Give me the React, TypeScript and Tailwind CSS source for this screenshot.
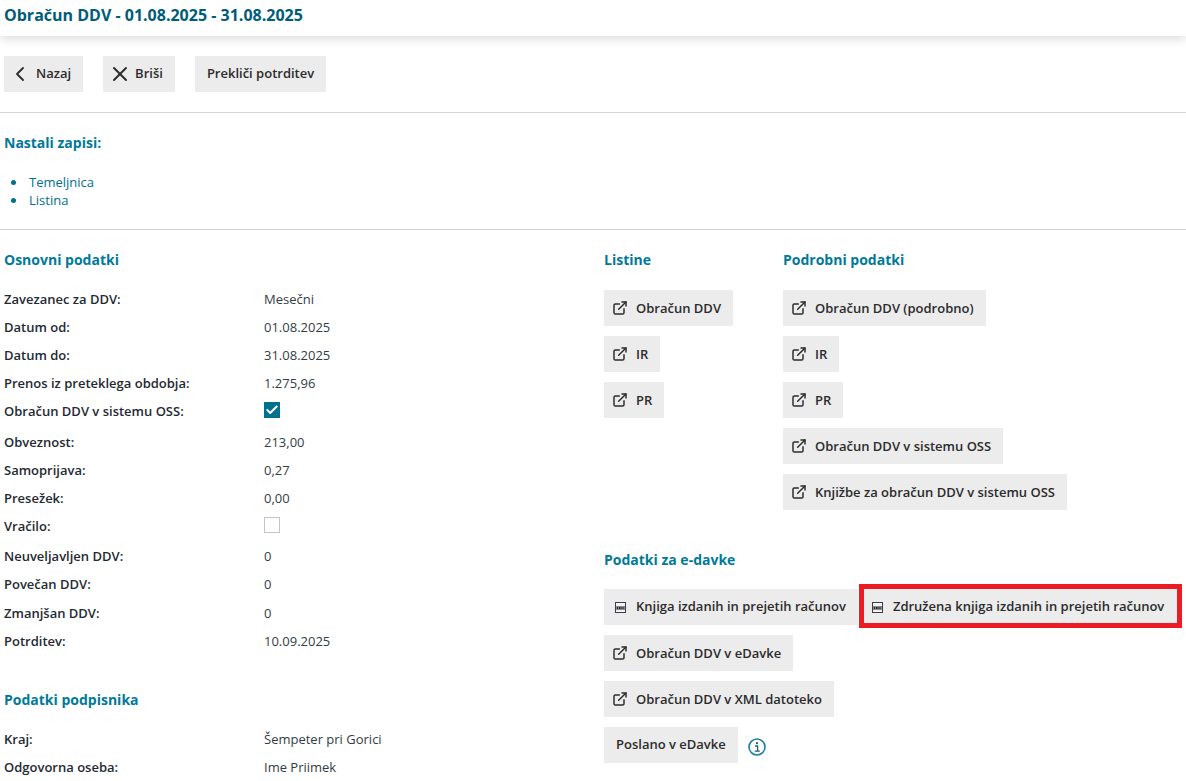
import { ExternalLink, ChevronLeft, X, Check } from 'lucide-react';

const font = { fontFamily: '"Open Sans", sans-serif' };

const basicRows: { label: string; value?: string; check?: boolean; className: string }[] = [
  { label: 'Zavezanec za DDV:', value: 'Mesečni', className: 'h-[28px]' },
  { label: 'Datum od:', value: '01.08.2025', className: 'h-[28px]' },
  { label: 'Datum do:', value: '31.08.2025', className: 'h-[28px]' },
  { label: 'Prenos iz preteklega obdobja:', value: '1.275,96', className: 'h-[28px]' },
  { label: 'Obračun DDV v sistemu OSS:', check: true, className: 'h-[31px] pb-[3px]' },
  { label: 'Obveznost:', value: '213,00', className: 'h-[28px]' },
  { label: 'Samoprijava:', value: '0,27', className: 'h-[28px]' },
  { label: 'Presežek:', value: '0,00', className: 'h-[28px]' },
  { label: 'Vračilo:', check: false, className: 'h-[30px] pb-[2px]' },
  { label: 'Neuveljavljen DDV:', value: '0', className: 'h-[28px]' },
  { label: 'Povečan DDV:', value: '0', className: 'h-[28px]' },
  { label: 'Zmanjšan DDV:', value: '0', className: 'h-[29px] pt-px' },
  { label: 'Potrditev:', value: '10.09.2025', className: 'h-[28px]' },
];

function Row({ label, value, check, className }: { label: string; value?: string; check?: boolean; className?: string }) {
  return (
    <div className={`flex items-center text-[13px] ${className}`}>
      <div className="w-[260px] font-semibold text-[#1f2a33]">{label}</div>
      {check === undefined && <div className="text-[#333c44]">{value}</div>}
      {check === true && (
        <div className="w-4 h-4 mb-1 bg-[#00708f] flex items-center justify-center">
          <Check className="w-[14px] h-[14px] text-white" strokeWidth={3.5} />
        </div>
      )}
      {check === false && <div className="w-4 h-4 mb-1 bg-white border border-[#c4c4c4]" />}
    </div>
  );
}

function XmlIcon() {
  return (
    <svg width="11" height="11" viewBox="0 0 11 11" className="shrink-0">
      <rect x="0.5" y="0.5" width="10" height="10" fill="#f4f4f4" stroke="#3c3c48" />
      <rect x="1" y="4" width="9" height="4" fill="#8a8a8a" />
      <path d="M2 5h1v2H2zM4 5h1v2H4zM5.5 5h1v2h-1zM7.5 5h1v2h-1z" fill="#26262e" />
    </svg>
  );
}

function LinkBtn({ children, className }: { children: React.ReactNode; className?: string }) {
  return (
    <div className={`h-9 inline-flex items-center bg-[#ececec] pl-[8px] pr-3 text-[13px] font-semibold text-[#2b2b2b] w-fit whitespace-nowrap ${className ?? ''}`}>
      <ExternalLink className="w-4 h-4 mr-2" strokeWidth={2.2} />
      <span className="pt-[2px]">{children}</span>
    </div>
  );
}

function XmlBtn({ children, className }: { children: React.ReactNode; className?: string }) {
  return (
    <div className={`relative h-9 inline-flex items-center bg-[#ececec] text-[13px] font-semibold text-[#2b2b2b] w-fit whitespace-nowrap ${className ?? ''}`}>
      <XmlIcon />
      {children}
    </div>
  );
}

function Heading({ children, className }: { children: React.ReactNode; className?: string }) {
  return <h2 className={`text-[14px] leading-5 font-bold text-[#007a99] ${className ?? ''}`}>{children}</h2>;
}

export default function App() {
  return (
    <div style={font} className="w-[1186px] h-[781px] overflow-hidden bg-white">
      {/* Page title */}
      <header className="h-[36px] px-1 flex items-center pb-[6px] bg-white shadow-[0_3px_10px_rgba(0,0,0,0.14)]">
        <h1 className="text-[16px] font-bold text-[#005c7a]">Obračun DDV - 01.08.2025 - 31.08.2025</h1>
      </header>

      {/* Toolbar */}
      <div className="flex gap-5 pl-1 pt-5 pb-5 border-b border-[#d4d4d4] h-[77px] box-border">
        <div className="h-9 flex items-center bg-[#ececec] pl-1 pr-3 text-[13px] font-semibold text-[#2b2b2b]">
          <ChevronLeft className="w-6 h-6 mr-1" strokeWidth={1.8} />
          Nazaj
        </div>
        <div className="h-9 flex items-center bg-[#ececec] pl-[5px] pr-3 text-[13px] font-semibold text-[#2b2b2b]">
          <X className="w-6 h-6 mr-[3px]" strokeWidth={2} />
          Briši
        </div>
        <div className="h-9 flex items-center bg-[#ececec] px-3 text-[13px] font-semibold text-[#2b2b2b]">Prekliči potrditev</div>
      </div>

      {/* Created records */}
      <div className="h-[117px] border-b border-[#d4d4d4] pl-1 pt-[20px]">
        <Heading>Nastali zapisi:</Heading>
        <ul className="mt-[20px] text-[13px] leading-[18px] text-[#00708f]">
          <li className="flex items-center">
            <span className="w-[5px] h-[5px] rounded-full bg-[#00708f] ml-[7px] mr-[13px]" />
            Temeljnica
          </li>
          <li className="flex items-center">
            <span className="w-[5px] h-[5px] rounded-full bg-[#00708f] ml-[7px] mr-[13px]" />
            Listina
          </li>
        </ul>
      </div>

      <div className="flex pl-1 pt-[20px]">
        {/* Basic data */}
        <div className="w-[600px]">
          <Heading>Osnovni podatki</Heading>
          <div className="mt-[16px]">
            {basicRows.map((r) => (
              <Row key={r.label} {...r} />
            ))}
          </div>
          <Heading className="mt-[34px]">Podatki podpisnika</Heading>
          <div className="mt-[16px]">
            <Row label="Kraj:" value="Šempeter pri Gorici" className="h-[28px]" />
            <Row label="Odgovorna oseba:" value="Ime Priimek" className="h-[28px]" />
          </div>
        </div>

        {/* Documents */}
        <div>
          <div className="flex">
            <div className="w-[179px]">
              <Heading>Listine</Heading>
              <div className="mt-[20px] flex flex-col gap-[10px]">
                <LinkBtn>Obračun DDV</LinkBtn>
                <LinkBtn>IR</LinkBtn>
                <LinkBtn>PR</LinkBtn>
              </div>
            </div>
            <div>
              <Heading>Podrobni podatki</Heading>
              <div className="mt-[20px] flex flex-col gap-[10px]">
                <LinkBtn>Obračun DDV (podrobno)</LinkBtn>
                <LinkBtn>IR</LinkBtn>
                <LinkBtn>PR</LinkBtn>
                <LinkBtn>Obračun DDV v sistemu OSS</LinkBtn>
                <LinkBtn>Knjižbe za obračun DDV v sistemu OSS</LinkBtn>
              </div>
            </div>
          </div>

          <Heading className="mt-[40px]">Podatki za e-davke</Heading>
          <div className="mt-[19px] flex flex-col gap-[10px]">
            <div className="flex gap-[6px]">
              <XmlBtn className="pl-[11px] pr-3 gap-[10px]">Knjiga izdanih in prejetih računov</XmlBtn>
              <XmlBtn className="pl-[8px] pr-[13px] gap-[10px]">
                Združena knjiga izdanih in prejetih računov
                {/* red annotation frame from the original screenshot */}
                <span className="absolute -left-[5px] -top-[5px] -right-[5px] -bottom-[3px] border-[5px] border-[#ed1c24]" />
              </XmlBtn>
            </div>
            <LinkBtn>Obračun DDV v eDavke</LinkBtn>
            <LinkBtn>Obračun DDV v XML datoteko</LinkBtn>
            <div className="flex items-center gap-[10px]">
              <div className="h-9 flex items-center bg-[#ececec] px-3 text-[13px] font-semibold text-[#2b2b2b]">Poslano v eDavke</div>
              <svg width="18" height="18" viewBox="0 0 18 18" className="mt-1" fill="none">
                <circle cx="9" cy="9" r="8" stroke="#1a82a3" strokeWidth="1.6" />
                <circle cx="9" cy="5.2" r="1.1" fill="#1f5f78" />
                <path d="M7 8h2.6v5M6.8 13.2h5" stroke="#1f5f78" strokeWidth="1.3" />
              </svg>
            </div>
          </div>
        </div>
      </div>
    </div>
  );
}
